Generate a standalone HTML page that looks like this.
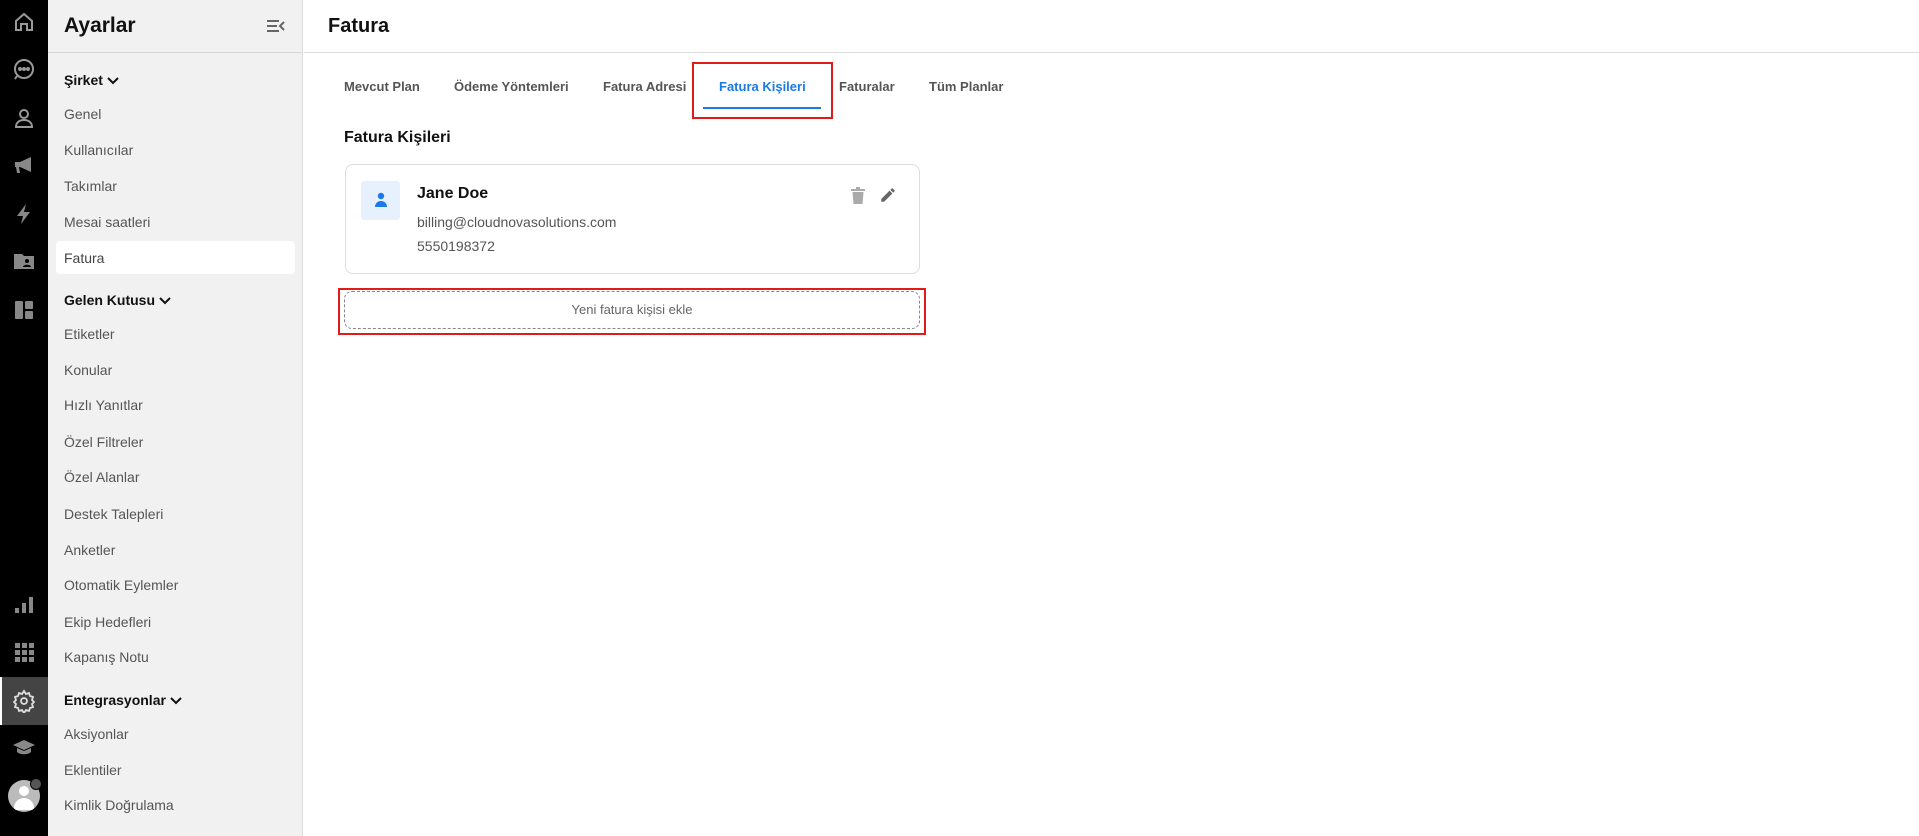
<!DOCTYPE html>
<html><head><meta charset="utf-8"><style>
*{box-sizing:border-box;margin:0;padding:0}
body{width:1919px;height:836px;overflow:hidden;font-family:"Liberation Sans",sans-serif;background:#fff;position:relative}
.bar{position:absolute;left:0;top:0;width:48px;height:836px;background:#000}
.bar svg{position:absolute;left:12px;width:24px;height:24px}
.side{position:absolute;left:48px;top:0;width:255px;height:836px;background:#f1f1f1;border-right:1px solid #ddd}
.side .hd{height:53px;border-bottom:1px solid #d6d6d6;position:relative}
.side .hd h1{position:absolute;left:16px;top:14px;font-size:21px;font-weight:bold;color:#111}
.t{position:absolute;left:64px;font-size:14px;color:#555;line-height:18px}
.g{position:absolute;left:64px;font-size:14px;font-weight:bold;color:#111;line-height:18px}
.g svg{vertical-align:middle;margin-left:4px}
.sel{position:absolute;left:56px;top:241px;width:239px;height:33px;background:#fff;border-radius:4px}
.main{position:absolute;left:304px;top:0;right:0;height:53px;border-bottom:1px solid #ddd}
.main h2{position:absolute;left:24px;top:15px;font-size:20px;font-weight:bold;color:#111}
.tab{position:absolute;top:79px;font-size:13px;font-weight:bold;color:#555}
.red{position:absolute;border:2px solid #e01b1b}
</style></head><body>
<div class="bar">
<svg style="top:10px" viewBox="0 0 24 24" fill="none" stroke="#999" stroke-width="2"><path d="M4 11l8-7 8 7v9h-5v-6H9v6H4z"/></svg>
<svg style="top:57px" viewBox="0 0 24 24" fill="none" stroke="#999" stroke-width="2"><circle cx="12" cy="12" r="9"/><path d="M5 19l-2 3" /><circle cx="8" cy="12" r="1" fill="#999"/><circle cx="12" cy="12" r="1" fill="#999"/><circle cx="16" cy="12" r="1" fill="#999"/></svg>
<svg style="top:106px" viewBox="0 0 24 24" fill="none" stroke="#999" stroke-width="2"><circle cx="12" cy="8" r="4"/><path d="M4 21c0-5 4-7 8-7s8 2 8 7z"/></svg>
<svg style="top:153px" viewBox="0 0 24 24" fill="#888"><path d="M3 9h5l11-5v15L8 14H7l1 6H5l-1-6H3z"/></svg>
<svg style="top:202px" viewBox="0 0 24 24" fill="#888"><path d="M14 2L5 14h6l-2 8 9-12h-6z"/></svg>
<svg style="top:249px" viewBox="0 0 24 24" fill="#888"><path d="M2 5h8l2 2h10v13H2z"/><circle cx="15" cy="12" r="2" fill="#000"/><path d="M11 18c0-3 8-3 8 0z" fill="#000"/></svg>
<svg style="top:298px" viewBox="0 0 24 24" fill="#888"><rect x="3" y="3" width="8" height="18" rx="1"/><rect x="13" y="3" width="8" height="8" rx="1"/><rect x="13" y="13" width="8" height="8" rx="1"/></svg>
<svg style="top:593px" viewBox="0 0 24 24" fill="#888"><rect x="3" y="15" width="4" height="5"/><rect x="10" y="10" width="4" height="10"/><rect x="17" y="4" width="4" height="16"/></svg>
<svg style="top:640px" viewBox="0 0 24 24" fill="#888"><rect x="3" y="3" width="5" height="5"/><rect x="10" y="3" width="5" height="5"/><rect x="17" y="3" width="5" height="5"/><rect x="3" y="10" width="5" height="5"/><rect x="10" y="10" width="5" height="5"/><rect x="17" y="10" width="5" height="5"/><rect x="3" y="17" width="5" height="5"/><rect x="10" y="17" width="5" height="5"/><rect x="17" y="17" width="5" height="5"/></svg>
<div style="position:absolute;left:0;top:677px;width:48px;height:48px;background:#444;border-left:2px solid #fff"></div>
<svg style="top:689px" viewBox="0 0 24 24" fill="none" stroke="#ddd" stroke-width="1.8"><circle cx="12" cy="12" r="3"/><path d="M12 2l2 3 3-1 1 3 3 1-1 3 2 2-2 2 1 3-3 1-1 3-3-1-2 3-2-3-3 1-1-3-3-1 1-3-2-2 2-2-1-3 3-1 1-3 3 1z"/></svg>
<svg style="top:736px" viewBox="0 0 24 24" fill="#888"><path d="M12 4L1 9l11 5 11-5z"/><path d="M5 12v4c3 3 11 3 14 0v-4l-7 3z"/></svg>
<div style="position:absolute;left:8px;top:780px;width:32px;height:32px;border-radius:50%;background:#bbb;overflow:hidden"><div style="position:absolute;left:11px;top:6px;width:10px;height:10px;border-radius:50%;background:#fff"></div><div style="position:absolute;left:6px;top:18px;width:20px;height:12px;border-radius:10px 10px 2px 2px;background:#fff"></div></div>
<div style="position:absolute;left:30px;top:778px;width:12px;height:12px;border-radius:50%;background:#555;border:1px solid #000"></div>
</div>
<div class="side"><div class="hd"><h1>Ayarlar</h1>
<svg style="position:absolute;left:218px;top:18px" width="20" height="16" viewBox="0 0 20 16" stroke="#666" stroke-width="2" fill="none"><path d="M1 3h12M1 8h10M1 13h12M18 4l-4 4 4 4"/></svg></div></div>
<div class="sel"></div>
<div class="g" style="top:71px">Şirket<svg width="12" height="8" viewBox="0 0 12 8" fill="none" stroke="#111" stroke-width="2"><path d="M1 1l5 5 5-5"/></svg></div>
<div class="t" style="top:105px">Genel</div>
<div class="t" style="top:141px">Kullanıcılar</div>
<div class="t" style="top:177px">Takımlar</div>
<div class="t" style="top:213px">Mesai saatleri</div>
<div class="t" style="top:249px;color:#444">Fatura</div>
<div class="g" style="top:291px">Gelen Kutusu<svg width="12" height="8" viewBox="0 0 12 8" fill="none" stroke="#111" stroke-width="2"><path d="M1 1l5 5 5-5"/></svg></div>
<div class="t" style="top:325px">Etiketler</div>
<div class="t" style="top:361px">Konular</div>
<div class="t" style="top:396px">Hızlı Yanıtlar</div>
<div class="t" style="top:433px">Özel Filtreler</div>
<div class="t" style="top:468px">Özel Alanlar</div>
<div class="t" style="top:505px">Destek Talepleri</div>
<div class="t" style="top:541px">Anketler</div>
<div class="t" style="top:576px">Otomatik Eylemler</div>
<div class="t" style="top:613px">Ekip Hedefleri</div>
<div class="t" style="top:648px">Kapanış Notu</div>
<div class="g" style="top:691px">Entegrasyonlar<svg width="12" height="8" viewBox="0 0 12 8" fill="none" stroke="#111" stroke-width="2"><path d="M1 1l5 5 5-5"/></svg></div>
<div class="t" style="top:725px">Aksiyonlar</div>
<div class="t" style="top:761px">Eklentiler</div>
<div class="t" style="top:796px">Kimlik Doğrulama</div>

<div class="main"><h2>Fatura</h2></div>
<div class="tab" style="left:344px">Mevcut Plan</div>
<div class="tab" style="left:454px">Ödeme Yöntemleri</div>
<div class="tab" style="left:603px">Fatura Adresi</div>
<div class="tab" style="left:719px;color:#1a7ae8">Fatura Kişileri</div>
<div class="tab" style="left:839px">Faturalar</div>
<div class="tab" style="left:929px">Tüm Planlar</div>
<div style="position:absolute;left:703px;top:107px;width:118px;height:2px;background:#1a7ae8"></div>
<div class="red" style="left:692px;top:62px;width:141px;height:57px"></div>

<div style="position:absolute;left:344px;top:129px;font-size:16px;font-weight:bold;color:#111">Fatura Kişileri</div>
<div style="position:absolute;left:345px;top:164px;width:575px;height:110px;border:1px solid #ddd;border-radius:8px"></div>
<div style="position:absolute;left:361px;top:181px;width:39px;height:39px;background:#e6f1fd;border-radius:3px"></div>
<svg style="position:absolute;left:372px;top:191px" width="18" height="18" viewBox="0 0 18 18" fill="#1a7ae8"><circle cx="9" cy="5" r="3.2"/><path d="M3 16c0-4 3-6 6-6s6 2 6 6z"/></svg>
<div style="position:absolute;left:417px;top:185px;font-size:16px;font-weight:bold;color:#111">Jane Doe</div>
<div style="position:absolute;left:417px;top:214px;font-size:14px;color:#555">billing@cloudnovasolutions.com</div>
<div style="position:absolute;left:417px;top:238px;font-size:14px;color:#555">5550198372</div>
<svg style="position:absolute;left:851px;top:187px" width="14" height="17" viewBox="0 0 14 17" fill="#aaa"><rect x="0" y="2" width="14" height="2"/><rect x="5" y="0" width="4" height="2"/><path d="M1.5 5h11l-1 12h-9z"/></svg>
<svg style="position:absolute;left:879px;top:186px" width="18" height="18" viewBox="0 0 24 24" fill="#666"><path d="M3 17.25V21h3.75L17.81 9.94l-3.75-3.75zM20.71 7.04a1 1 0 000-1.41l-2.34-2.34a1 1 0 00-1.41 0l-1.83 1.83 3.75 3.75z"/></svg>
<div style="position:absolute;left:344px;top:291px;width:576px;height:38px;border:1px dashed #888;border-radius:8px;text-align:center;line-height:36px;font-size:13px;color:#666">Yeni fatura kişisi ekle</div>
<div class="red" style="left:338px;top:288px;width:588px;height:47px"></div>
</body></html>
